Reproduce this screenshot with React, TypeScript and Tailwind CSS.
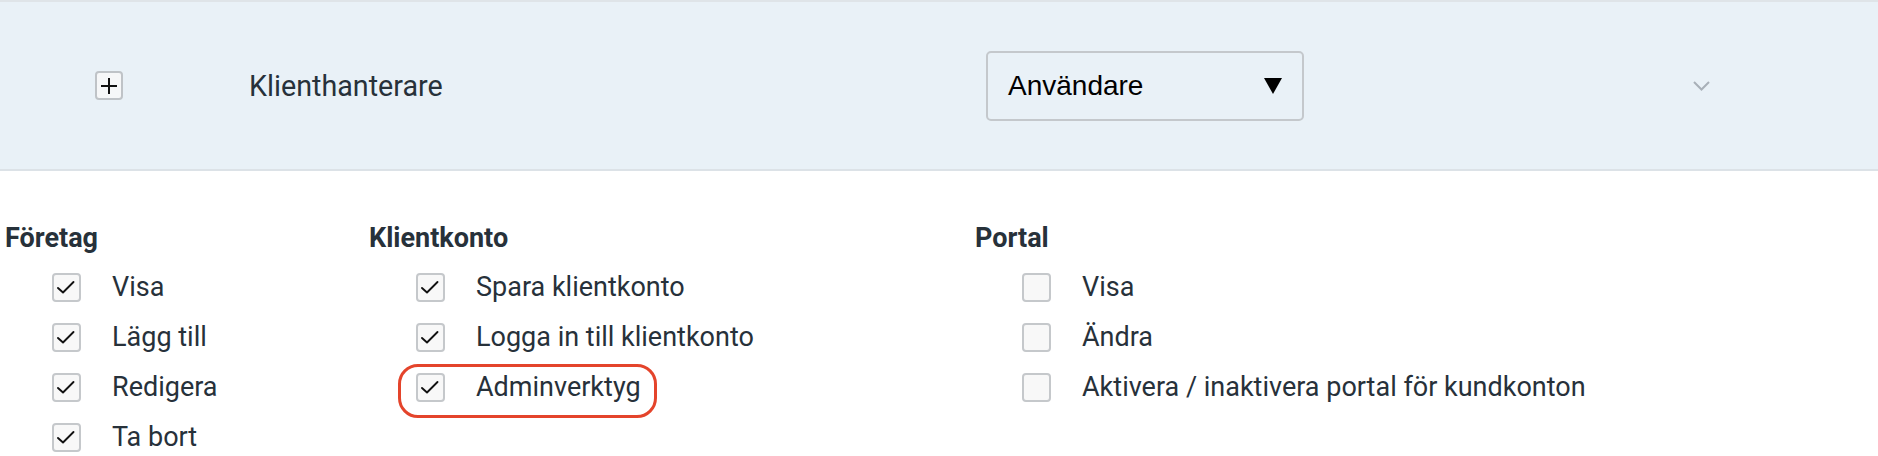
import React from "react";

function Check({ checked }: { checked: boolean }) {
  return (
    <span className="box-border flex h-[29px] w-[29px] shrink-0 items-center justify-center rounded-[4px] border-2 border-[#c5c8cb] bg-[#f8f8f8]">
      {checked && (
        <svg width="25" height="25" viewBox="0 0 25 25" fill="none">
          <path d="M4 13 L9 17.5 L19.5 7" stroke="#111" strokeWidth="1.9" strokeLinecap="round" strokeLinejoin="round" />
        </svg>
      )}
    </span>
  );
}

type Item = { label: string; checked: boolean; highlight?: boolean };

function Column({ title, items, width }: { title: string; items: Item[]; width: string }) {
  return (
    <div className={`flex flex-col ${width}`}>
      <div className="text-[27px] font-bold leading-[30px] text-[#27313a]">{title}</div>
      <div className="mt-[9px] flex flex-col">
        {items.map((it) => (
          <div key={it.label} className="relative flex h-[50px] items-center pl-[47px]">
            <Check checked={it.checked} />
            <span className="ml-[31px] whitespace-nowrap text-[27px] leading-[30px] text-[#27313a]">{it.label}</span>
            {it.highlight && (
              <span className="pointer-events-none absolute left-[29px] top-[2px] h-[54px] w-[259px] rounded-[20px] border-[3px] border-[#e4442b]" />
            )}
          </div>
        ))}
      </div>
    </div>
  );
}

export default function App() {
  return (
    <div className="h-[456px] w-[1878px] overflow-hidden bg-white" style={{ fontFamily: "Roboto, 'Noto Sans', sans-serif" }}>
      <div className="box-border flex h-[171px] items-center border-t-2 border-b-2 border-t-[#dfe4e8] border-b-[#dce2e7] bg-[#e9f1f7] pl-[95px]">
        <span className="box-border flex h-[29px] w-[28px] items-center justify-center rounded-[4px] border-2 border-[#bfc3c7] bg-[#f6f7f8]">
          <svg width="16" height="16" viewBox="0 0 16 16">
            <path d="M8 0 V16 M0 8 H16" stroke="#111" strokeWidth="2" />
          </svg>
        </span>
        <span className="ml-[126px] w-[737px] text-[28.7px] leading-[32px] text-[#27313a]">Klienthanterare</span>
        <div className="box-border flex h-[70px] w-[318px] items-center justify-between rounded-[5px] border-2 border-[#c4c8cc] bg-[#e9f1f7] pl-[20px] pr-[20px]">
          <span className="text-[28px] leading-[32px] text-black" style={{ fontFamily: "'Liberation Sans', Arial, sans-serif" }}>
            Användare
          </span>
          <svg width="18" height="16" viewBox="0 0 18 16">
            <path d="M0 0 H18 L9 16 Z" fill="#000" />
          </svg>
        </div>
        <svg className="ml-[389px]" width="17" height="10" viewBox="0 0 17 10" fill="none">
          <path d="M1 1 L8.5 8.5 L16 1" stroke="#a8b0b8" strokeWidth="2" />
        </svg>
      </div>
      <div className="flex pl-[5px] pt-[52px]">
        <Column
          title="Företag"
          width="w-[364px]"
          items={[
            { label: "Visa", checked: true },
            { label: "Lägg till", checked: true },
            { label: "Redigera", checked: true },
            { label: "Ta bort", checked: true },
          ]}
        />
        <Column
          title="Klientkonto"
          width="w-[606px]"
          items={[
            { label: "Spara klientkonto", checked: true },
            { label: "Logga in till klientkonto", checked: true },
            { label: "Adminverktyg", checked: true, highlight: true },
          ]}
        />
        <Column
          title="Portal"
          width="w-[600px]"
          items={[
            { label: "Visa", checked: false },
            { label: "Ändra", checked: false },
            { label: "Aktivera / inaktivera portal för kundkonton", checked: false },
          ]}
        />
      </div>
    </div>
  );
}
